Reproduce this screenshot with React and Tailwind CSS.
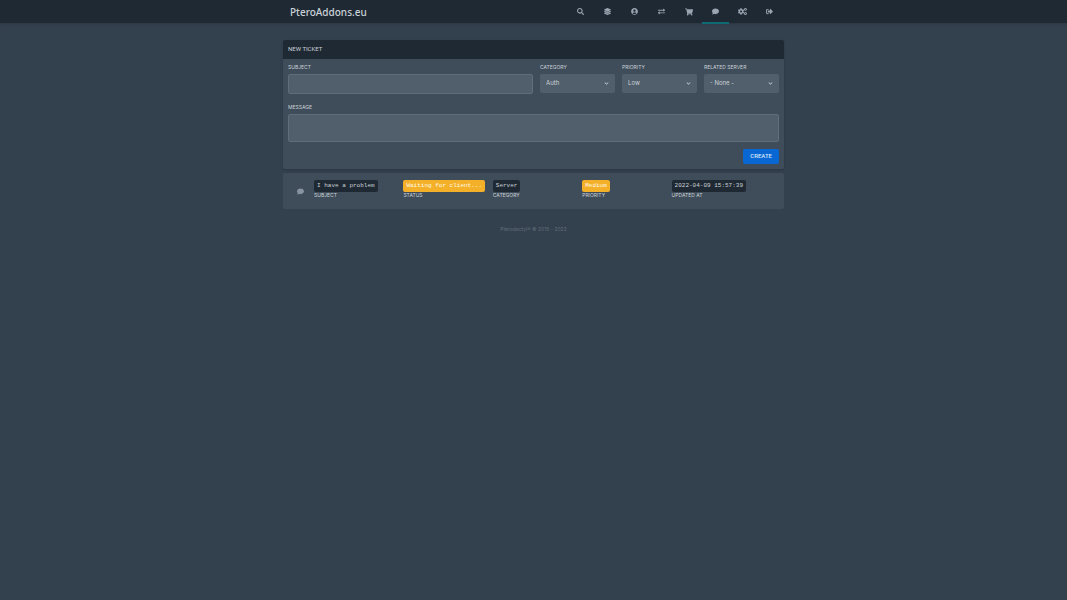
import { useState } from 'react';
import {
  FaSearch,
  FaLayerGroup,
  FaUserCircle,
  FaExchangeAlt,
  FaShoppingCart,
  FaComment,
  FaCogs,
  FaSignOutAlt,
} from 'react-icons/fa';

const NAV_ITEMS = [
  { name: 'Search', icon: FaSearch },
  { name: 'Servers', icon: FaLayerGroup },
  { name: 'Account', icon: FaUserCircle },
  { name: 'Transfers', icon: FaExchangeAlt },
  { name: 'Shop', icon: FaShoppingCart, size: 'text-[8px]' },
  { name: 'Tickets', icon: FaComment, active: true },
  { name: 'Admin', icon: FaCogs, size: 'text-[9px]' },
  { name: 'Sign out', icon: FaSignOutAlt },
];

const TICKETS = [
  {
    id: 1,
    subject: 'I have a problem',
    status: 'Waiting for client...',
    category: 'Server',
    priority: 'Medium',
    updatedAt: '2022-04-09 15:57:39',
  },
];

export default function App() {
  return (
    <div className="min-h-screen bg-[#33404d] font-['Inter',sans-serif] text-[#cad1d8]">
      <NavigationBar />
      <main className="mx-auto mt-[17px] max-w-[501px]">
        <NewTicketForm />
        <div className="mt-1 flex flex-col gap-1">
          {TICKETS.map(ticket => (
            <TicketRow key={ticket.id} ticket={ticket} />
          ))}
        </div>
      </main>
      <footer className="mt-4 text-center text-[5px] leading-[8px] text-[#606d7a]">
        Pterodactyl® © 2015 - 2022
      </footer>
    </div>
  );
}

function NavigationBar() {
  return (
    <header className="bg-[#1f2933] shadow">
      <div className="mx-auto flex h-[23px] max-w-[501px] items-center justify-between">
        <a href="#" className="px-[7px] font-['Noto_Sans',sans-serif] text-[10px] leading-4 font-medium text-[#cad1d8]">PteroAddons.eu</a>
        <nav className="flex h-full pr-px">
          {NAV_ITEMS.map(({ name, icon: Icon, size, active }) => (
            <a
              key={name}
              href="#"
              aria-label={name}
              className={`flex w-[27px] items-center justify-center text-[#9aa5b1] ${size || 'text-[7px]'} ${active ? 'shadow-[inset_0_-1px_0_#0f6a73,0_1px_0_#0f6a73]' : ''}`}
            >
              <Icon />
            </a>
          ))}
        </nav>
      </div>
    </header>
  );
}

function NewTicketForm() {
  const [subject, setSubject] = useState('');
  const [message, setMessage] = useState('');

  return (
    <section className="rounded-xs bg-[#3f4d5a] shadow">
      <h2 className="rounded-t-xs bg-[#1f2933] px-[5px] pt-1 pb-1.5 font-['Roboto',sans-serif] text-[6px] leading-[9px] uppercase">New Ticket</h2>
      <form onSubmit={e => e.preventDefault()} className="px-[5px] pt-1 pb-[5px]">
        <div className="grid grid-cols-[245fr_75fr_75fr_75fr] items-start gap-[7px]">
          <div>
            <Label htmlFor="subject">Subject</Label>
            <input
              id="subject"
              type="text"
              value={subject}
              onChange={e => setSubject(e.target.value)}
              className="block h-5 w-full rounded-xs border border-[#606d7b] bg-[#515f6c] px-1 text-[6px] outline-none"
            />
          </div>
          <SelectField id="category" label="Category" options={['Auth', 'Server', 'Billing']} />
          <SelectField id="priority" label="Priority" options={['Low', 'Medium', 'High']} />
          <SelectField id="server" label="Related Server" options={['- None -']} />
        </div>
        <div className="mt-[9px]">
          <Label htmlFor="message">Message</Label>
          <textarea
            id="message"
            value={message}
            onChange={e => setMessage(e.target.value)}
            className="block h-7 w-full resize-none rounded-xs border border-[#606d7b] bg-[#515f6c] p-1 text-[6px] outline-none"
          />
        </div>
        <div className="mt-[7px] flex justify-end">
          <button type="submit" className="rounded-xs bg-[#0967d3] px-[7px] pt-[2px] pb-1 font-['Roboto',sans-serif] text-[6px] leading-[9px] font-medium text-[#d5e6fa] uppercase">
            Create
          </button>
        </div>
      </form>
    </section>
  );
}

function Label({ htmlFor, children }) {
  return (
    <label htmlFor={htmlFor} className="mb-[3px] block text-[5px] leading-[8px] whitespace-nowrap uppercase">{children}</label>
  );
}

function SelectField({ id, label, options }) {
  return (
    <div>
      <Label htmlFor={id}>{label}</Label>
      <div className="relative">
        <select id={id} className="block h-[19px] w-full appearance-none rounded-xs bg-[#515f6c] px-1.5 pb-[2px] text-[6px] outline-none">
          {options.map(option => (
            <option key={option}>{option}</option>
          ))}
        </select>
        <svg viewBox="0 0 20 20" className="pointer-events-none absolute top-1.5 right-[5px] size-[7px] fill-[#c3d1df]">
          <path d="M9.293 12.95l.707.707L15.657 8l-1.414-1.414L10 10.828 5.757 6.586 4.343 8z" />
        </svg>
      </div>
    </div>
  );
}

function TicketRow({ ticket }) {
  return (
    <article className="flex items-center rounded-xs bg-[#3f4d5a] py-[7px] pr-[23px]">
      <FaComment className="mr-[10px] ml-[14px] shrink-0 text-[7px] text-[#8793a0]" />
      <div className="grid flex-1 grid-cols-5 pb-[3px]">
        <TicketCell label="Subject" value={ticket.subject} />
        <TicketCell label="Status" value={ticket.status} highlight />
        <TicketCell label="Category" value={ticket.category} />
        <TicketCell label="Priority" value={ticket.priority} highlight />
        <TicketCell label="Updated at" value={ticket.updatedAt} />
      </div>
    </article>
  );
}

function TicketCell({ label, value, highlight }) {
  return (
    <div>
      <span
        className={`block w-fit rounded-xs px-[3px] font-['Liberation_Mono',monospace] text-[6px] leading-[12px] whitespace-nowrap ${highlight ? 'bg-[#f3b028] text-[#fffbea]' : 'bg-[#1f2933] text-[#cad1d8]'}`}
      >
        {value}
      </span>
      <p className="text-[5px] leading-[7px] uppercase">{label}</p>
    </div>
  );
}
